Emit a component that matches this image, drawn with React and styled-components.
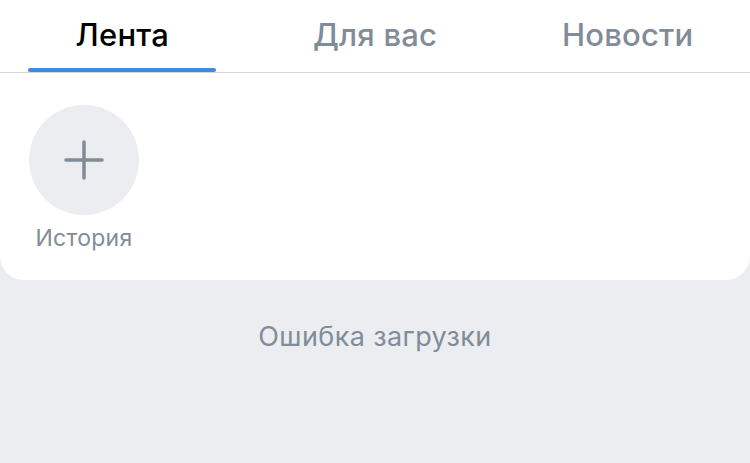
import styled, { createGlobalStyle } from 'styled-components';

const GlobalStyle = createGlobalStyle`
  html, body {
    margin: 0;
    padding: 0;
    background: #ebedf0;
    font-family: 'Inter', 'Roboto', sans-serif;
    -webkit-font-smoothing: antialiased;
  }
`;

const Page = styled.div`
  width: 750px;
  min-height: 463px;
  background: #ebedf0;
  overflow: hidden;
`;

const TabBar = styled.nav`
  display: flex;
  height: 72px;
  margin: 0 -4px;
  background: #fff;
  border-bottom: 1px solid #d7d8d9;
`;

const Tab = styled.div`
  position: relative;
  flex: 1;
  display: flex;
  align-items: center;
  justify-content: center;
  padding-bottom: 4px;
  font-size: 31px;
  font-weight: 500;
  color: ${(p) => (p.$active ? '#000' : '#818c99')};
  letter-spacing: 0.2px;
`;

const Underline = styled.span`
  position: absolute;
  left: 32px;
  right: 33px;
  bottom: 0;
  height: 4px;
  border-radius: 2px;
  background: #3f8ae0;
`;

const StoriesCard = styled.section`
  background: #fff;
  border-radius: 0 0 24px 24px;
  padding: 32px 29px 29px;
  display: flex;
  gap: 20px;
`;

const Story = styled.div`
  display: flex;
  flex-direction: column;
  align-items: center;
  width: 110px;
  gap: 10px;
`;

const AddCircle = styled.div`
  width: 110px;
  height: 110px;
  border-radius: 50%;
  background: #ebedf0;
  display: flex;
  align-items: center;
  justify-content: center;
`;

const StoryLabel = styled.span`
  font-size: 23px;
  color: #818c99;
  line-height: 26px;
  letter-spacing: 0.3px;
  white-space: nowrap;
`;

const ErrorText = styled.p`
  margin: 0;
  padding-top: 40px;
  text-align: center;
  font-size: 27px;
  color: #818c99;
  letter-spacing: 0.4px;
`;

const tabs = ['Лента', 'Для вас', 'Новости'];

export default function App() {
  return (
    <Page>
      <GlobalStyle />
      <TabBar>
        {tabs.map((t, i) => (
          <Tab key={t} $active={i === 0}>
            {t}
            {i === 0 && <Underline />}
          </Tab>
        ))}
      </TabBar>
      <StoriesCard>
        <Story>
          <AddCircle>
            <svg width="40" height="40" viewBox="0 0 40 40">
              <path
                d="M20 2v36M2 20h36"
                stroke="#818c99"
                strokeWidth="3.5"
                strokeLinecap="round"
              />
            </svg>
          </AddCircle>
          <StoryLabel>История</StoryLabel>
        </Story>
      </StoriesCard>
      <ErrorText>Ошибка загрузки</ErrorText>
    </Page>
  );
}
